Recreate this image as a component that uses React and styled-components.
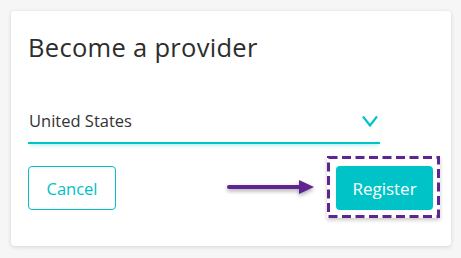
import React from "react";
import styled, { createGlobalStyle } from "styled-components";

const Global = createGlobalStyle`
  html, body { margin: 0; padding: 0; background: #f6f6f6; }
  body { font-family: "Open Sans", "Liberation Sans", sans-serif; }
`;

const Page = styled.div`
  padding: 11px 10px 12px 11px;
`;

const Card = styled.div`
  box-sizing: border-box;
  width: 440px;
  height: 235px;
  background: #fff;
  border-radius: 4px;
  box-shadow: 0 1px 4px rgba(0, 0, 0, 0.14);
  padding: 18px 18px 0 17px;
  display: flex;
  flex-direction: column;
`;

const Title = styled.h1`
  margin: 0;
  font-size: 25.5px;
  font-weight: 400;
  line-height: 36px;
  color: #2d2d2d;
  letter-spacing: 0.3px;
`;

const Select = styled.div`
  margin-top: 45px;
  width: 352px;
  display: flex;
  align-items: center;
  justify-content: space-between;
  padding: 0 2px 10px 1px;
  box-sizing: border-box;
  border-bottom: 2px solid #00c4c8;
  box-shadow: 0 3px 4px -2px rgba(0, 196, 200, 0.35);
  font-size: 16.5px;
  line-height: 22px;
  color: #333;
`;

const Actions = styled.div`
  margin-top: 12px;
  display: flex;
  align-items: flex-start;
  justify-content: space-between;
`;

const OutlineButton = styled.button`
  box-sizing: border-box;
  width: 88px;
  height: 44px;
  border: 1px solid #00c0c6;
  border-radius: 4px;
  background: #fff;
  color: #00c0c6;
  font-family: inherit;
  font-size: 16.5px;
  padding: 0;
  margin-top: 10px;
`;

const Right = styled.div`
  display: flex;
  align-items: center;
  gap: 12px;
  margin-right: -7px;
`;

const Highlight = styled.div`
  position: relative;
  padding: 10px 7px 8px 9px;
  box-shadow: 0 2px 4px rgba(0, 0, 0, 0.22);
`;

const DashFrame = styled.svg`
  position: absolute;
  inset: 0;
  width: 100%;
  height: 100%;
  overflow: visible;
  pointer-events: none;
`;

const PrimaryButton = styled.button`
  box-sizing: border-box;
  width: 97px;
  height: 44px;
  border: none;
  border-radius: 4px;
  background: #00c3c7;
  color: #fff;
  font-family: inherit;
  font-size: 17px;
  padding: 0;
  display: block;
`;

const Arrow = () => (
  <svg width="88" height="20" viewBox="0 0 88 20" style={{ overflow: "visible", filter: "drop-shadow(0 2px 2px rgba(0,0,0,0.35))" }}>
    <line x1="2" y1="10" x2="74" y2="10" stroke="#5f2490" strokeWidth="4" strokeLinecap="round" />
    <polygon points="72,3 87,10 72,17" fill="#5f2490" />
  </svg>
);

const Chevron = () => (
  <svg width="16" height="12" viewBox="0 0 16 12">
    <polyline points="1,1.5 8,10.5 15,1.5" fill="none" stroke="#00c4c8" strokeWidth="2.2" />
  </svg>
);

export default function App() {
  return (
    <>
      <Global />
      <Page>
        <Card>
          <Title>Become a provider</Title>
          <Select>
            <span>United States</span>
            <Chevron />
          </Select>
          <Actions>
            <OutlineButton>Cancel</OutlineButton>
            <Right>
              <Arrow />
              <Highlight>
                <PrimaryButton>Register</PrimaryButton>
                <DashFrame viewBox="0 0 113 62" preserveAspectRatio="none">
                  <rect x="1.5" y="1.5" width="110" height="59" fill="none" stroke="#5f2490" strokeWidth="3" strokeDasharray="9 4.5" />
                </DashFrame>
              </Highlight>
            </Right>
          </Actions>
        </Card>
      </Page>
    </>
  );
}
